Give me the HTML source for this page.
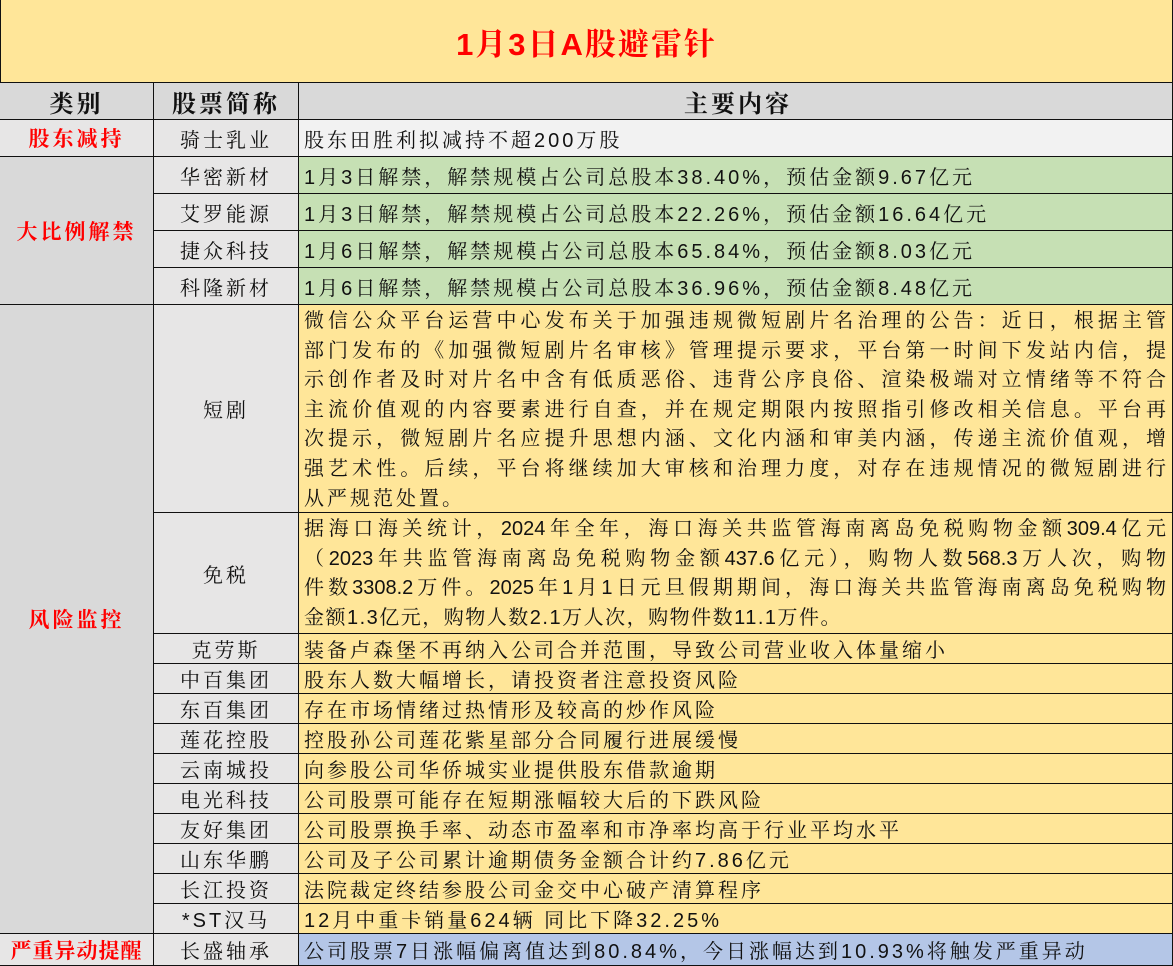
<!DOCTYPE html>
<html><head><meta charset="utf-8"><style>
*{margin:0;padding:0;box-sizing:border-box}
body{width:1173px;height:966px;background:#fff;font-family:"Liberation Sans","Noto Serif CJK SC","Noto Sans CJK SC",serif;overflow:hidden;position:relative}
.c{position:absolute;border-right:1.5px solid #111;border-bottom:1.5px solid #111;display:flex;align-items:center;overflow:hidden;white-space:nowrap}
.cat{left:0;width:154px;justify-content:center;color:#f00;font-size:21px;font-weight:bold;letter-spacing:3px;background:#d9d9d9}
.nm{left:154px;width:145px;justify-content:center;font-size:20px;letter-spacing:3px;background:#e7e6e6;color:#111}
.ct{left:299px;width:874px;padding-left:5px;font-size:20px;letter-spacing:3px;color:#111;background:#ffe699}
.g{background:#c6e0b4}.b{background:#b4c6e7}.w{background:#f2f2f2}
.ml{display:block;white-space:normal;padding:2px 6px 0 5px;letter-spacing:0}
.ml div{height:29.6px;line-height:29.6px;text-align:justify;text-align-last:justify;font-size:20px}
.ml div.l{text-align-last:left;letter-spacing:3px}
</style></head><body>
<div class="c" style="left:0;top:0;width:1173px;height:83px;background:#ffe699;justify-content:center;color:#f00;font-size:31px;font-weight:bold;letter-spacing:2px;border-left:1.5px solid #111">1月3日A股避雷针</div>
<div class="c cat" style="top:83px;height:37px;color:#111;font-size:24px">类别</div>
<div class="c nm" style="top:83px;height:37px;font-weight:bold;font-size:24px;background:#d9d9d9">股票简称</div>
<div class="c ct" style="top:83px;height:37px;justify-content:center;font-weight:bold;font-size:24px;background:#d9d9d9">主要内容</div>

<div class="c cat" style="top:120px;height:37px;background:#e7e6e6">股东减持</div>
<div class="c nm" style="top:120px;height:37px">骑士乳业</div>
<div class="c ct w" style="top:120px;height:37px">股东田胜利拟减持不超200万股</div>

<div class="c cat" style="top:157px;height:148px">大比例解禁</div>
<div class="c nm" style="top:157px;height:37px">华密新材</div>
<div class="c ct g" style="top:157px;height:37px">1月3日解禁，解禁规模占公司总股本38.40%，预估金额9.67亿元</div>
<div class="c nm" style="top:194px;height:37px">艾罗能源</div>
<div class="c ct g" style="top:194px;height:37px">1月3日解禁，解禁规模占公司总股本22.26%，预估金额16.64亿元</div>
<div class="c nm" style="top:231px;height:37px">捷众科技</div>
<div class="c ct g" style="top:231px;height:37px">1月6日解禁，解禁规模占公司总股本65.84%，预估金额8.03亿元</div>
<div class="c nm" style="top:268px;height:37px">科隆新材</div>
<div class="c ct g" style="top:268px;height:37px">1月6日解禁，解禁规模占公司总股本36.96%，预估金额8.48亿元</div>

<div class="c cat" style="top:305px;height:629px">风险监控</div>
<div class="c nm" style="top:305px;height:208px">短剧</div>
<div class="c ct ml" style="top:305px;height:208px">
<div>微信公众平台运营中心发布关于加强违规微短剧片名治理的公告：近日，根据主管</div>
<div>部门发布的《加强微短剧片名审核》管理提示要求，平台第一时间下发站内信，提</div>
<div>示创作者及时对片名中含有低质恶俗、违背公序良俗、渲染极端对立情绪等不符合</div>
<div>主流价值观的内容要素进行自查，并在规定期限内按照指引修改相关信息。平台再</div>
<div>次提示，微短剧片名应提升思想内涵、文化内涵和审美内涵，传递主流价值观，增</div>
<div>强艺术性。后续，平台将继续加大审核和治理力度，对存在违规情况的微短剧进行</div>
<div class="l">从严规范处置。</div>
</div>
<div class="c nm" style="top:513px;height:121px">免税</div>
<div class="c ct ml" style="top:513px;height:121px">
<div>据海口海关统计，2024年全年，海口海关共监管海南离岛免税购物金额309.4亿元</div>
<div>（2023年共监管海南离岛免税购物金额437.6亿元），购物人数568.3万人次，购物</div>
<div>件数3308.2万件。2025年1月1日元旦假期期间，海口海关共监管海南离岛免税购物</div>
<div class="l" style="letter-spacing:1.5px">金额1.3亿元，购物人数2.1万人次，购物件数11.1万件。</div>
</div>
<div class="c nm" style="top:634px;height:30px">克劳斯</div>
<div class="c ct" style="top:634px;height:30px">装备卢森堡不再纳入公司合并范围，导致公司营业收入体量缩小</div>
<div class="c nm" style="top:664px;height:30px">中百集团</div>
<div class="c ct" style="top:664px;height:30px">股东人数大幅增长，请投资者注意投资风险</div>
<div class="c nm" style="top:694px;height:30px">东百集团</div>
<div class="c ct" style="top:694px;height:30px">存在市场情绪过热情形及较高的炒作风险</div>
<div class="c nm" style="top:724px;height:30px">莲花控股</div>
<div class="c ct" style="top:724px;height:30px">控股孙公司莲花紫星部分合同履行进展缓慢</div>
<div class="c nm" style="top:754px;height:30px">云南城投</div>
<div class="c ct" style="top:754px;height:30px">向参股公司华侨城实业提供股东借款逾期</div>
<div class="c nm" style="top:784px;height:30px">电光科技</div>
<div class="c ct" style="top:784px;height:30px">公司股票可能存在短期涨幅较大后的下跌风险</div>
<div class="c nm" style="top:814px;height:30px">友好集团</div>
<div class="c ct" style="top:814px;height:30px">公司股票换手率、动态市盈率和市净率均高于行业平均水平</div>
<div class="c nm" style="top:844px;height:30px">山东华鹏</div>
<div class="c ct" style="top:844px;height:30px">公司及子公司累计逾期债务金额合计约7.86亿元</div>
<div class="c nm" style="top:874px;height:30px">长江投资</div>
<div class="c ct" style="top:874px;height:30px">法院裁定终结参股公司金交中心破产清算程序</div>
<div class="c nm" style="top:904px;height:30px">*ST汉马</div>
<div class="c ct" style="top:904px;height:30px">12月中重卡销量624辆 同比下降32.25%</div>

<div class="c cat" style="top:934px;height:32px;background:#e7e6e6;letter-spacing:1px">严重异动提醒</div>
<div class="c nm" style="top:934px;height:32px">长盛轴承</div>
<div class="c ct b" style="top:934px;height:32px">公司股票7日涨幅偏离值达到80.84%，今日涨幅达到10.93%将触发严重异动</div>
</body></html>
